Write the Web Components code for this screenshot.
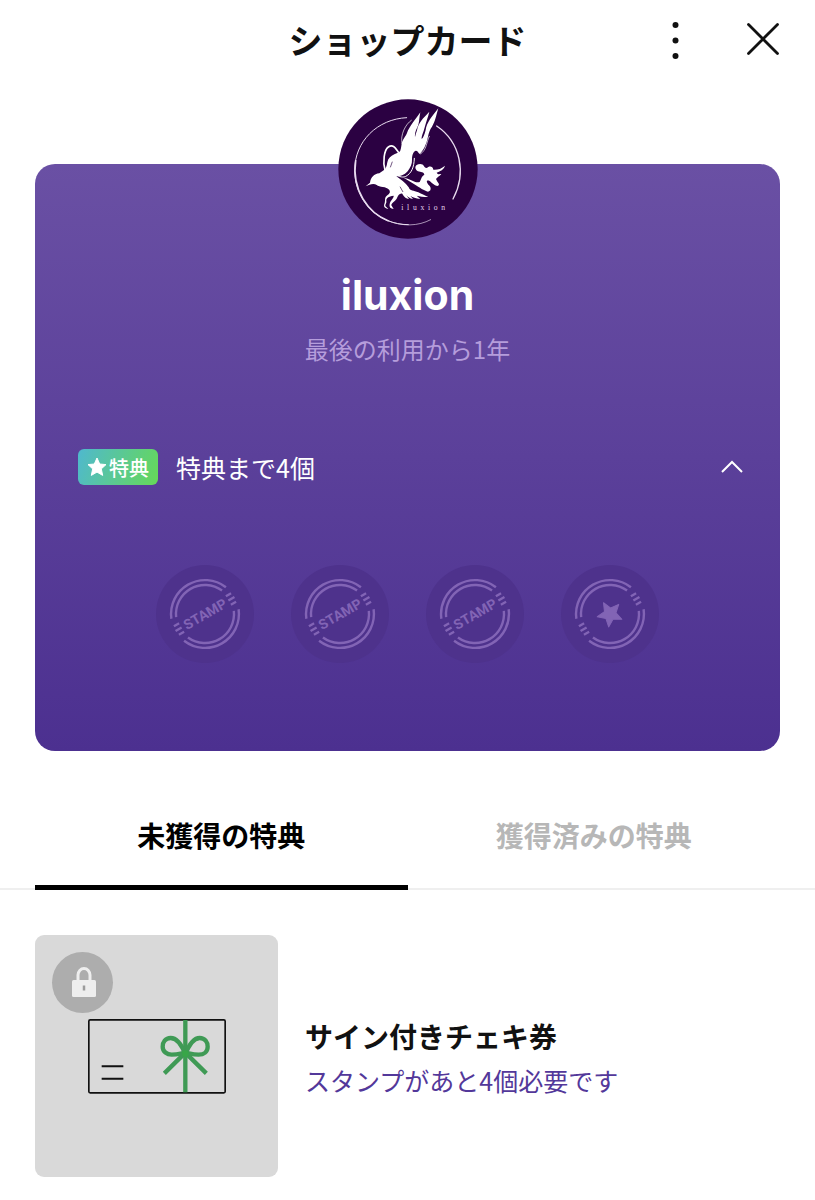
<!DOCTYPE html>
<html lang="ja">
<head>
    <meta charset="UTF-8">
    <meta name="viewport" content="width=device-width, initial-scale=1.0">
    <title>ショップカード</title>
    <style>
        :root {
            --black: #111111;
            --white: #ffffff;
            --gray--100: #efefef;
            --gray--300: #d9d9d9;
            --gray--400: #b7b7b7;
            --primary: #53389a;
            --lavender: #b59ddb;
            --stamp-line: #8264b5;
            --stamp-bg: #4e328c;
            --side: 35px;
        }

        body {
            margin: 0;
            background-color: var(--white);
            color: var(--black);
            font-family: "Noto Sans CJK JP", "Noto Sans", sans-serif;
        }
    </style>
</head>
<body>
    <page-header>ショップカード</page-header>
    <main>
        <shop-card>
            <shop-logo slot="logo"></shop-logo>
            <span slot="name">iluxion</span>
            <span slot="note">最後の利用から1年</span>
            <span slot="badge">特典</span>
            <span slot="remaining">特典まで4個</span>
            <stamp-mark></stamp-mark>
            <stamp-mark></stamp-mark>
            <stamp-mark></stamp-mark>
            <stamp-mark goal></stamp-mark>
        </shop-card>
        <reward-tabs>
            <span slot="first">未獲得の特典</span>
            <span slot="second">獲得済みの特典</span>
            <reward-item slot="first-panel">
                <span slot="title">サイン付きチェキ券</span>
                <span slot="note">スタンプがあと4個必要です</span>
            </reward-item>
        </reward-tabs>
    </main>

    <script>
        class PageHeaderComponent extends HTMLElement {
            constructor() {
                super();

                const shadow = this.attachShadow({ mode: "open" });

                shadow.innerHTML = `
                    <style>
                        :host {
                            display: block;
                        }

                        header {
                            display: grid;
                            grid-template-columns: 1fr auto 1fr;
                            align-items: center;
                            height: 80px;
                            padding: 0 28px;
                        }

                        h1 {
                            grid-column: 2;
                            margin: 0;
                            font-size: 34px;
                            font-weight: 700;
                            line-height: 48px;
                        }

                        .actions {
                            display: flex;
                            justify-content: flex-end;
                            gap: 40px;
                        }

                        button {
                            width: 48px;
                            height: 48px;
                            padding: 0;
                            border: none;
                            background: none;
                            color: inherit;
                            cursor: pointer;
                        }

                        svg {
                            display: block;
                        }
                    </style>
                    <header>
                        <h1><slot></slot></h1>
                        <div class="actions">
                            <button type="button" aria-label="メニュー">
                                <svg width="48" height="48" viewBox="0 0 48 48" fill="currentColor">
                                    <circle cx="24.500" cy="9" r="3" />
                                    <circle cx="24.500" cy="24.500" r="3" />
                                    <circle cx="24.500" cy="40" r="3" />
                                </svg>
                            </button>
                            <button type="button" aria-label="閉じる">
                                <svg width="48" height="48" viewBox="0 0 48 48" fill="none" stroke="currentColor" stroke-width="2.8" stroke-linecap="round">
                                    <path d="M9.5 8.5 38.5 37.5M38.5 8.5 9.5 37.5" />
                                </svg>
                            </button>
                        </div>
                    </header>
                `;
            }
        }

        class ShopLogoComponent extends HTMLElement {
            constructor() {
                super();

                const shadow = this.attachShadow({ mode: "open" });

                shadow.innerHTML = `
                    <style>
                        :host {
                            display: block;
                            width: 140px;
                            height: 140px;
                        }

                        svg {
                            display: block;
                        }
                    </style>
                    <svg width="140" height="140" viewBox="27 26 420 420">
                        <circle cx="237" cy="236" r="209" fill="#2b0142" />
                        <g fill="none" stroke="#e9dcf0" stroke-linecap="round">
                            <path d="M233 82C145 86 77 153 77 240C77 330 146 403 238 403" stroke-width="3" />
                            <path d="M80 211C67 299 119 369 177 391" stroke-width="5" />
                            <path d="M177 391C220 409 268 408 305 388" stroke-width="2" />
                            <path d="M323 107C394 155 414 248 372 326" stroke-width="4" />
                        </g>
                        <g fill="#ffffff">
                            <path d="M110 288L123 277C125 262 135 250 151 249L164 240C172 235 173 226 175 216C177 204 185 197 196 192L210 186C216 181 216 171 218 160C222 144 230 139 234 128C242 107 257 91 274 66C270 84 272 96 265 111C259 122 257 133 258 140C260 134 261 128 264 120C268 97 282 84 301 64C297 82 292 92 288 108C283 128 277 138 278 146C283 142 287 132 290 119C293 97 309 78 328 54C321 77 319 93 309 109C295 128 299 145 289 165C286 174 278 186 272 191C267 187 267 181 260 181C253 183 249 194 249 208C250 220 244 232 236 243C226 255 213 258 202 258C213 267 230 277 239 291C243 303 254 300 268 306C278 311 286 315 298 320C283 319 272 319 263 316L274 326C259 324 252 321 244 316L252 326C242 325 237 320 232 315L240 326C228 323 224 318 220 310C211 308 207 316 203 325C197 334 187 338 187 345L194 356C186 354 180 353 182 341C184 330 195 323 194 316C178 318 172 323 172 331C174 337 168 342 169 347L178 356C168 354 162 350 167 338C170 329 165 322 175 315C181 310 185 307 181 299C172 287 151 292 143 284C135 278 121 282 110 288Z" />
                            <path d="M263 224C270 219 282 219 285 228C290 235 293 233 298 230C304 227 312 229 313 238C324 239 337 236 348 226C344 239 332 243 323 247C327 254 331 251 337 251C332 258 325 260 321 266C326 278 332 279 329 285C324 291 311 280 302 272C290 267 292 277 300 285C308 293 306 303 297 304C286 302 272 292 256 282L224 262C243 265 258 279 272 275C277 266 277 258 286 253C285 245 275 246 267 243C259 238 256 230 263 224Z" />
                        </g>
                        <g fill="none" stroke="#ffffff" stroke-width="5" stroke-linecap="round">
                            <path d="M168 239C161 216 165 179 178 170C196 157 203 183 212 190" />
                            <path d="M256 204C255 231 248 249 229 259C219 262 207 259 193 248" stroke-width="3" />
                            <path d="M219 160C213 133 230 101 247 90" stroke-width="2" />
                            <path d="M274 191C294 179 292 154 301 138" stroke-width="2" />
                            <path d="M236 277C261 301 278 303 291 309" stroke="#2b0142" />
                        </g>
                        <path d="M190 214L184 231M213 289L222 305" fill="none" stroke="#2b0142" stroke-width="2" />
                        <text x="217" y="359" fill="#e3d6ec" font-family="Liberation Serif, serif" font-size="23" letter-spacing="11">iluxion</text>
                    </svg>
                `;
            }
        }

        class StampMarkComponent extends HTMLElement {
            constructor() {
                super();

                const shadow = this.attachShadow({ mode: "open" });
                const center = this.hasAttribute("goal")
                    ? `<path class="star" d="M0 -13 3.6 -4.8 12.4 -4 5.8 1.9 7.6 10.5 0 6 -7.6 10.5 -5.8 1.9 -12.4 -4 -3.6 -4.8Z" />`
                    : `<text y="5" text-anchor="middle">STAMP</text>`;

                // everything inside the ring is drawn level, then tilted as one group
                shadow.innerHTML = `
                    <style>
                        :host {
                            display: block;
                            border-radius: 50%;
                            background-color: var(--stamp-bg);
                        }

                        svg {
                            display: block;
                        }

                        .line {
                            fill: none;
                            stroke: var(--stamp-line);
                            stroke-width: 2.4;
                        }

                        .center {
                            fill: var(--stamp-line);
                            font-family: "Liberation Sans Narrow", Roboto, sans-serif;
                            font-size: 14px;
                            font-weight: 700;
                        }

                        .star {
                            stroke: var(--stamp-line);
                            stroke-linejoin: round;
                        }
                    </style>
                    <svg width="98" height="98" viewBox="-49 -49 98 98">
                        <g transform="rotate(-30)">
                            <g class="line">
                                <path d="M-31.5 -12.7A34 34 0 0 1 31.5 -12.7M-31.5 12.7A34 34 0 0 0 31.5 12.7" />
                                <path d="M-26.5 -11.8A29 29 0 0 1 26.5 -11.8M-26.5 11.8A29 29 0 0 0 26.5 11.8" />
                                <path d="M27 -5h6M27 0h7M27 5h6M-27 -5h-6M-27 0h-7M-27 5h-6" />
                            </g>
                            <g class="center">${center}</g>
                        </g>
                    </svg>
                `;
            }
        }

        class ShopCardComponent extends HTMLElement {
            constructor() {
                super();

                const shadow = this.attachShadow({ mode: "open" });

                shadow.innerHTML = `
                    <style>
                        :host {
                            display: block;
                            padding: 84px var(--side) 0;
                        }

                        .card {
                            display: flex;
                            flex-direction: column;
                            align-items: center;
                            box-sizing: border-box;
                            padding-bottom: 88px;
                            border-radius: 20px;
                            background: linear-gradient(#6a50a4, #4c3090);
                            color: var(--white);
                        }

                        .logo {
                            margin-top: -65px;
                        }

                        h2 {
                            margin: 26px 0 0;
                            font-family: Inter, "Noto Sans", sans-serif;
                            font-size: 41px;
                            font-weight: 700;
                            line-height: 60px;
                        }

                        .note {
                            margin: 6px 0 0;
                            font-size: 24px;
                            line-height: 36px;
                            color: var(--lavender);
                        }

                        .status {
                            display: flex;
                            align-items: center;
                            align-self: stretch;
                            gap: 18px;
                            margin-top: 76px;
                            padding: 0 24px 0 43px;
                        }

                        .badge {
                            display: flex;
                            align-items: center;
                            gap: 2px;
                            height: 36px;
                            padding: 0 9px;
                            border-radius: 6px;
                            background: linear-gradient(110deg, #4fb8cf, #66d957);
                            font-size: 20px;
                            font-weight: 500;
                        }

                        .remaining {
                            flex: 1;
                            font-size: 25px;
                            line-height: 48px;
                        }

                        .toggle {
                            width: 48px;
                            height: 48px;
                            padding: 0;
                            border: none;
                            background: none;
                            color: inherit;
                            cursor: pointer;
                        }

                        .toggle[aria-expanded="false"] {
                            transform: rotate(180deg);
                        }

                        .stamps {
                            display: flex;
                            flex-wrap: wrap;
                            justify-content: center;
                            gap: 37px;
                            margin-top: 74px;
                        }

                        .stamps[hidden] {
                            display: none;
                        }

                        svg {
                            display: block;
                        }
                    </style>
                    <section class="card">
                        <div class="logo"><slot name="logo"></slot></div>
                        <h2><slot name="name"></slot></h2>
                        <p class="note"><slot name="note"></slot></p>
                        <div class="status">
                            <span class="badge">
                                <svg width="20" height="20" viewBox="0 0 20 20" fill="currentColor" stroke="currentColor" stroke-linejoin="round">
                                    <path d="M10 1 12.7 7 19 7.6 14.3 11.9 15.7 18.4 10 15.1 4.3 18.4 5.7 11.9 1 7.6 7.3 7Z" />
                                </svg>
                                <slot name="badge"></slot>
                            </span>
                            <span class="remaining"><slot name="remaining"></slot></span>
                            <button class="toggle" type="button" aria-label="スタンプを表示" aria-expanded="true">
                                <svg width="48" height="48" viewBox="0 0 48 48" fill="none" stroke="currentColor" stroke-width="2">
                                    <path d="M14 29 24 19 34 29" />
                                </svg>
                            </button>
                        </div>
                        <div class="stamps"><slot></slot></div>
                    </section>
                `;

                const toggle = shadow.querySelector(".toggle");
                const stamps = shadow.querySelector(".stamps");

                toggle.addEventListener("click", () => {
                    stamps.hidden = !stamps.hidden;
                    toggle.setAttribute("aria-expanded", String(!stamps.hidden));
                });
            }
        }

        class RewardTabsComponent extends HTMLElement {
            constructor() {
                super();

                const shadow = this.attachShadow({ mode: "open" });

                shadow.innerHTML = `
                    <style>
                        :host {
                            display: block;
                            margin-top: 34px;
                        }

                        .tabs {
                            display: grid;
                            grid-template-columns: 1fr 1fr;
                            padding: 0 var(--side);
                            box-shadow: inset 0 -2px var(--gray--100);
                        }

                        button {
                            height: 105px;
                            padding: 0 0 6px;
                            border: none;
                            background: none;
                            color: var(--gray--400);
                            font: inherit;
                            font-size: 28px;
                            font-weight: 700;
                            cursor: pointer;
                        }

                        button[aria-selected="true"] {
                            box-shadow: inset 0 -5px #000000;
                            color: #000000;
                        }

                        .panel {
                            padding: 45px var(--side) 22px;
                        }
                    </style>
                    <div class="tabs" role="tablist">
                        <button type="button" role="tab" id="tab-first" aria-controls="first" aria-selected="true"><slot name="first"></slot></button>
                        <button type="button" role="tab" id="tab-second" aria-controls="second" aria-selected="false"><slot name="second"></slot></button>
                    </div>
                    <div class="panel" role="tabpanel" id="first" aria-labelledby="tab-first"><slot name="first-panel"></slot></div>
                    <div class="panel" role="tabpanel" id="second" aria-labelledby="tab-second" hidden><slot name="second-panel"></slot></div>
                `;

                const tabs = shadow.querySelectorAll("button");

                tabs.forEach((tab) => {
                    tab.addEventListener("click", () => {
                        tabs.forEach((other) => {
                            other.setAttribute("aria-selected", String(other === tab));
                            shadow.getElementById(other.getAttribute("aria-controls")).hidden = other !== tab;
                        });
                    });
                });
            }
        }

        class RewardItemComponent extends HTMLElement {
            constructor() {
                super();

                const shadow = this.attachShadow({ mode: "open" });

                shadow.innerHTML = `
                    <style>
                        :host {
                            display: flex;
                            align-items: center;
                            gap: 27px;
                        }

                        .thumb {
                            position: relative;
                            display: flex;
                            align-items: center;
                            justify-content: center;
                            flex: none;
                            width: 243px;
                            height: 242px;
                            border-radius: 9px;
                            background-color: var(--gray--300);
                        }

                        .lock {
                            position: absolute;
                            top: 17px;
                            left: 17px;
                            border-radius: 50%;
                            background-color: #adadad;
                        }

                        .text {
                            padding-top: 4px;
                        }

                        svg {
                            display: block;
                        }

                        h3 {
                            margin: 0;
                            font-size: 28px;
                            font-weight: 700;
                            line-height: 44px;
                        }

                        p {
                            margin: 0;
                            font-size: 25px;
                            line-height: 44px;
                            color: var(--primary);
                        }
                    </style>
                    <div class="thumb">
                        <svg width="138" height="75" viewBox="205 296 414 225" fill="none">
                            <rect x="207.5" y="298.5" width="409" height="219" rx="4" stroke="#111111" stroke-width="5" />
                            <path d="M246 438h65M246 475h65" stroke="#111111" stroke-width="6" />
                            <g stroke="#3f9a55" stroke-width="13">
                                <path d="M497 299v217" />
                                <path d="M497 397L434 459M497 397L560 459" />
                                <path d="M497 402C487 376 474 353 453 353C437 353 429 366 429 379C429 394 442 403 456 403C473 403 485 399 497 397" />
                                <path d="M497 402C507 376 520 353 540 353C556 353 564 366 564 379C564 394 552 403 537 403C520 403 509 399 497 397" />
                            </g>
                            <circle cx="497" cy="400" r="10" fill="#38a648" />
                        </svg>
                        <div class="lock">
                            <svg width="61" height="61" viewBox="0 0 61 61" fill="none">
                                <rect x="20" y="28" width="24" height="17" rx="1.5" fill="#eeeeee" />
                                <path d="M26 29v-6a6 6.5 0 0 1 12 0v6" stroke="#eeeeee" stroke-width="3" />
                                <path d="M32 33.500v5" stroke="#9c9c9c" stroke-width="2.500" />
                            </svg>
                        </div>
                    </div>
                    <div class="text">
                        <h3><slot name="title"></slot></h3>
                        <p><slot name="note"></slot></p>
                    </div>
                `;
            }
        }

        customElements.define("page-header", PageHeaderComponent);
        customElements.define("shop-logo", ShopLogoComponent);
        customElements.define("stamp-mark", StampMarkComponent);
        customElements.define("shop-card", ShopCardComponent);
        customElements.define("reward-tabs", RewardTabsComponent);
        customElements.define("reward-item", RewardItemComponent);
    </script>
</body>
</html>
